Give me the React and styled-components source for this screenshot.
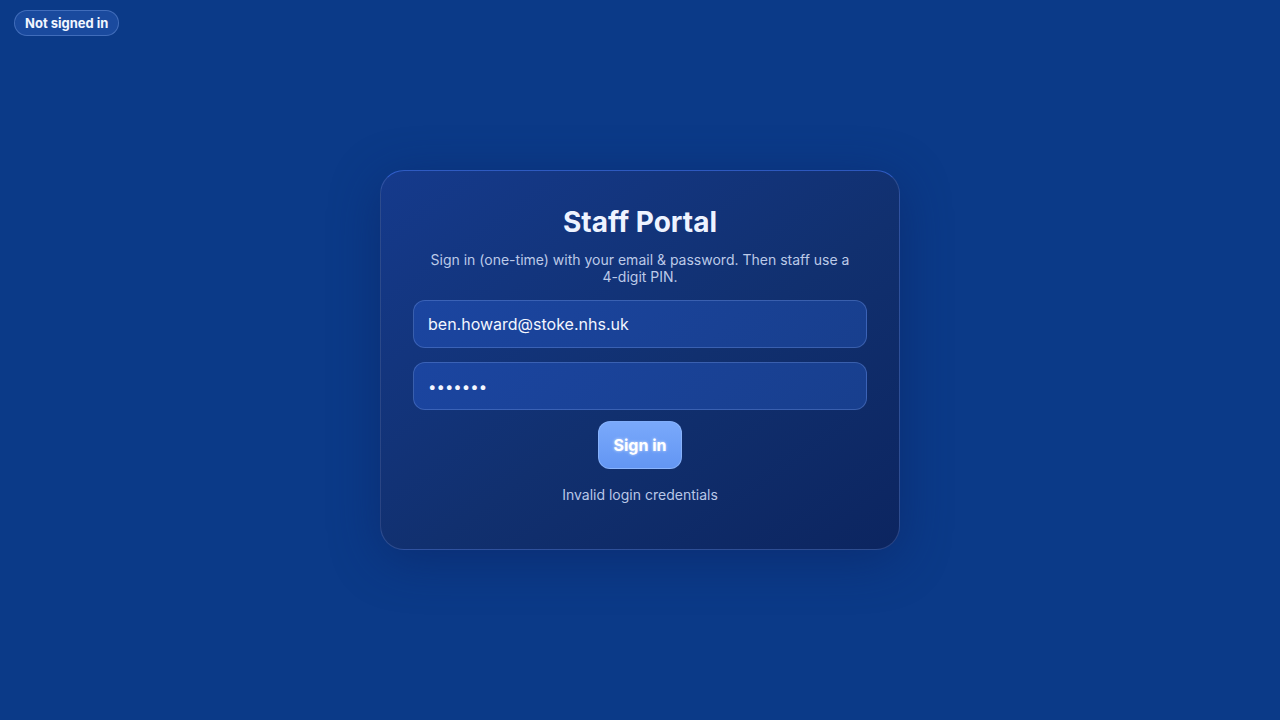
import React from "react";
import styled, { createGlobalStyle } from "styled-components";

const Global = createGlobalStyle`
  html, body { margin: 0; padding: 0; }
  body {
    background: #0b3a88;
    font-family: Inter, "Noto Sans", "Liberation Sans", sans-serif;
    color: #eef3ff;
    min-height: 720px;
  }
`;

const Page = styled.div`
  position: relative;
  min-height: 720px;
  display: flex;
  align-items: center;
  justify-content: center;
  box-sizing: border-box;
`;

const Badge = styled.div`
  position: absolute;
  top: 10px;
  left: 14px;
  height: 26px;
  padding: 0 10px;
  box-sizing: border-box;
  display: flex;
  align-items: center;
  border-radius: 999px;
  background: #1a4a9e;
  border: 1px solid rgba(140, 175, 240, 0.35);
  font-size: 13px;
  font-weight: 700;
  color: #f2f6ff;
`;

const Card = styled.div`
  width: 520px;
  height: 380px;
  box-sizing: border-box;
  border-radius: 24px;
  padding: 34px 32px 40px;
  background: linear-gradient(145deg, #153a8c 0%, #11306f 55%, #0c2560 100%);
  border: 1px solid rgba(120, 150, 220, 0.28);
  border-top-color: rgba(60, 110, 230, 0.7);
  box-shadow: 0 10px 50px rgba(10, 30, 90, 0.45);
  display: flex;
  flex-direction: column;
  align-items: stretch;
  text-align: center;
`;

const Title = styled.h1`
  margin: 0;
  font-size: 28px;
  line-height: 34px;
  font-weight: 700;
  color: #eef3ff;
`;

const Subtitle = styled.p`
  align-self: center;
  max-width: 428px;
  margin: 12px 0 0;
  font-size: 14px;
  line-height: 17px;
  color: #bccae8;
`;

const Field = styled.input`
  margin-top: ${(p) => p.$gap}px;
  height: 48px;
  box-sizing: border-box;
  border-radius: 12px;
  border: 1px solid rgba(120, 155, 230, 0.35);
  background: linear-gradient(135deg, #1b45a0 0%, #183f8e 100%);
  padding: 0 14px;
  font-family: inherit;
  font-size: ${(p) => (p.type === "password" ? "15px" : "16px")};
  color: #f3f6ff;
  outline: none;
`;

const Button = styled.button`
  align-self: center;
  margin-top: 11px;
  width: 84px;
  height: 48px;
  border-radius: 12px;
  border: 1px solid rgba(150, 190, 255, 0.6);
  background: linear-gradient(180deg, #7aa9fb 0%, #6396f3 100%);
  color: #ffffff;
  font-family: inherit;
  font-size: 16px;
  font-weight: 700;
  text-shadow: 0 0 3px rgba(255, 255, 255, 0.7);
  cursor: pointer;
`;

const Message = styled.div`
  margin-top: 17px;
  font-size: 14px;
  line-height: 18px;
  color: #b9c7e7;
`;

export default function App() {
  return (
    <>
      <Global />
      <Page>
        <Badge>Not signed in</Badge>
        <Card>
          <Title>Staff Portal</Title>
          <Subtitle>
            Sign in (one-time) with your email &amp; password. Then staff use a 4-digit PIN.
          </Subtitle>
          <Field $gap={15} type="email" defaultValue="ben.howard@stoke.nhs.uk" />
          <Field $gap={14} type="password" defaultValue="1234567" />
          <Button>Sign in</Button>
          <Message>Invalid login credentials</Message>
        </Card>
      </Page>
    </>
  );
}
